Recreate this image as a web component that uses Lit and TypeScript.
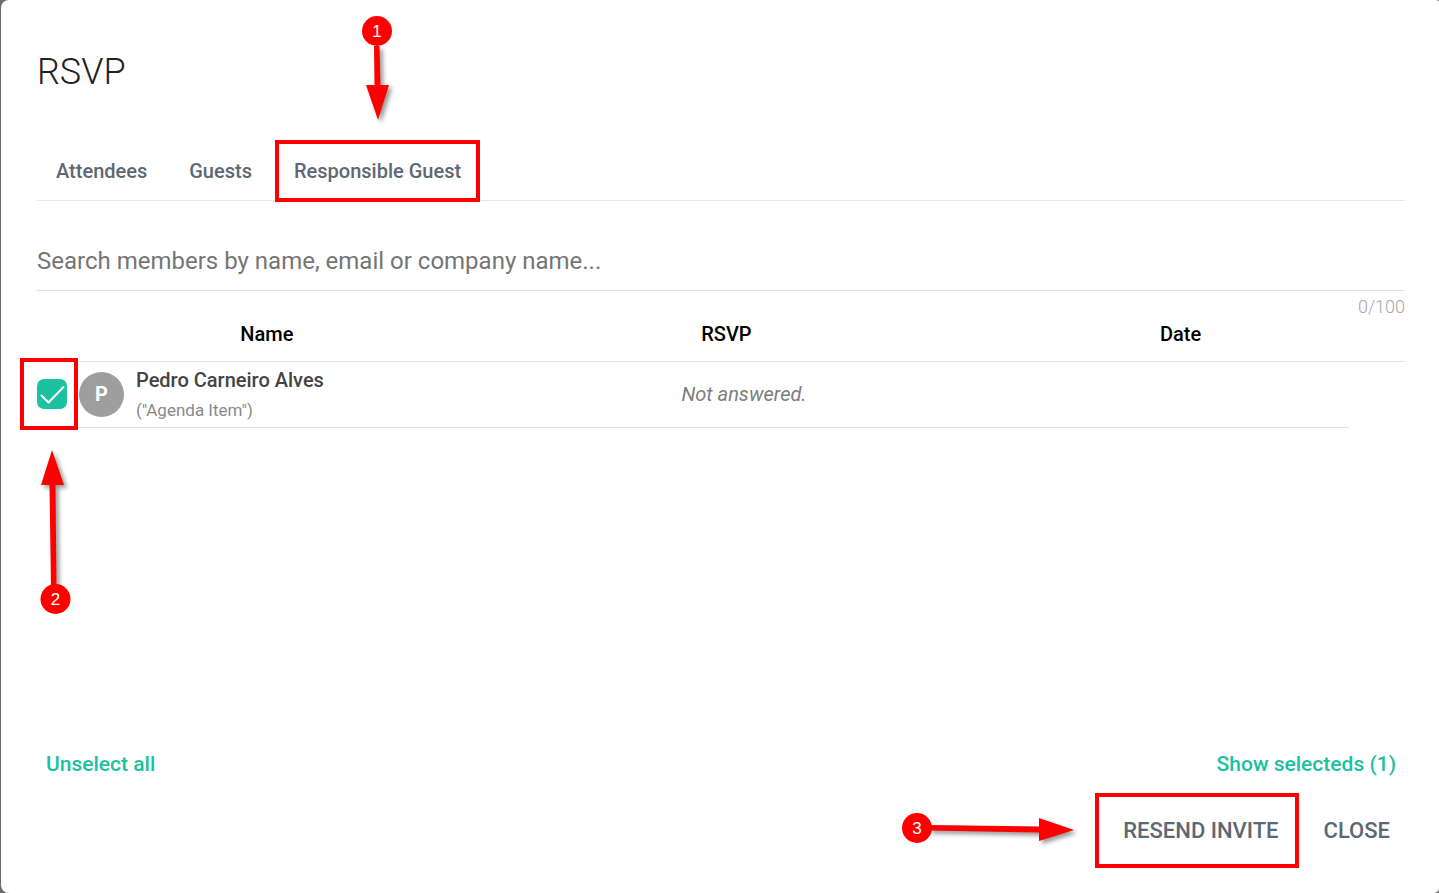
import { LitElement, html, css, svg } from "lit";
import { customElement, state } from "lit/decorators.js";

@customElement("app-root")
export class AppRoot extends LitElement {
  static styles = css`
    :host {
      display: block;
      min-height: 100vh;
      overflow: hidden;
      background: #6e6b6d;
      color: #222;
      font-family: Roboto, "Liberation Sans", sans-serif;
      font-size: 20px;
      line-height: 24px;
    }
    * {
      box-sizing: border-box;
    }
    button,
    input {
      font: inherit;
      color: inherit;
      border: 0;
      margin: 0;
      padding: 0;
      background: none;
      outline: none;
    }
    button {
      cursor: pointer;
    }
    .dialog {
      display: flex;
      flex-direction: column;
      min-height: 100vh;
      margin-left: 1px;
      padding: 48px 34px 38px 36px;
      background: #fff;
      border-radius: 8px 3px 5px 8px;
    }
    .title {
      margin: 0 0 45px;
      font-size: 36px;
      line-height: 48px;
      font-weight: 300;
    }
    .tabs {
      display: flex;
      gap: 6px;
      height: 60px;
      padding-left: 1px;
      border-bottom: 1px solid #e7e7e7;
    }
    .tab {
      position: relative;
      padding: 0 18px;
      color: #5c6873;
      font-weight: 500;
    }
    .search {
      margin-top: 30px;
    }
    .search-input {
      display: block;
      width: 100%;
      height: 60px;
      border-bottom: 1px solid #dedede;
      font-size: 24px;
    }
    .search-input::placeholder {
      color: #757575;
      opacity: 1;
    }
    .counter {
      padding-top: 4px;
      text-align: right;
      font-size: 18px;
      font-weight: 300;
      color: #a8a8a8;
    }
    .members {
      width: 100%;
      table-layout: fixed;
      border-collapse: separate;
      border-spacing: 0;
    }
    .col-wide {
      width: 33.6%;
    }
    .col-end {
      width: 56px;
    }
    .head {
      padding: 3px 0 15px;
      border-bottom: 1px solid #e7e7e7;
      color: #000;
      font-weight: 500;
    }
    .cell {
      height: 66px;
      padding: 0 0 1px;
      border-bottom: 1px solid #dedede;
      vertical-align: middle;
    }
    .member {
      display: flex;
      align-items: center;
      gap: 12px;
    }
    .check {
      position: relative;
      display: grid;
      width: 30px;
      height: 30px;
    }
    .check-input,
    .check-mark {
      grid-area: 1 / 1;
      width: 30px;
      height: 30px;
    }
    .check-input {
      appearance: none;
      border: 1px solid #9e9e9e;
      border-radius: 7px;
      cursor: pointer;
    }
    .check-input:checked {
      border: 0;
      background: #1bc1a1;
    }
    .check-mark {
      pointer-events: none;
      z-index: 1;
    }
    .check-input:not(:checked) + .check-mark {
      visibility: hidden;
    }
    .avatar {
      display: grid;
      place-items: center;
      width: 45px;
      height: 45px;
      border-radius: 50%;
      background: #9e9e9e;
      color: #fff;
      font-weight: 700;
    }
    .who {
      display: grid;
      padding-top: 2px;
      line-height: 30px;
    }
    .name {
      color: #444;
      font-weight: 500;
    }
    .note {
      color: #8a8a8a;
      font-size: 17px;
    }
    .answer {
      padding-left: 35px;
      text-align: center;
      font-style: italic;
      color: #7d7d7d;
    }
    .selection {
      display: flex;
      justify-content: space-between;
      margin-top: auto;
      padding: 0 9px;
    }
    .link {
      color: #1bc1a1;
      font-size: 21px;
      font-weight: 500;
    }
    .actions {
      display: flex;
      justify-content: flex-end;
      gap: 15px;
      margin-top: 31px;
    }
    .action {
      position: relative;
      height: 48px;
      padding: 0 15px;
      color: #5c6873;
      font-size: 22px;
      font-weight: 500;
      text-transform: uppercase;
    }
    .frame {
      position: absolute;
      border: 4px solid #f00;
      pointer-events: none;
    }
    .frame-tab {
      inset: -1px -1px -2px;
    }
    .frame-check {
      inset: -21px -11px -21px -17px;
    }
    .frame-action {
      inset: -14px -5px -13px -13px;
    }
    .pointer {
      position: absolute;
      overflow: visible;
      pointer-events: none;
      z-index: 2;
    }
    .pointer-tab {
      left: 50%;
      bottom: 100%;
    }
    .pointer-check {
      left: 50%;
      top: 100%;
    }
    .pointer-action {
      right: 100%;
      top: 50%;
    }
    .shaft {
      filter: drop-shadow(3px 3px 2px rgba(0, 0, 0, 0.4));
    }
    .digit {
      fill: #fff;
      font-family: "Liberation Sans", sans-serif;
      font-size: 17px;
      font-weight: 400;
      text-anchor: middle;
    }
  `;

  @state() private selected = true;

  private badge(x: number, y: number, n: number) {
    return svg`<circle cx=${x} cy=${y} r="15" fill="#f00"></circle>
      <text class="digit" x=${x} y=${y + 6}>${n}</text>`;
  }

  render() {
    return html`
      <main class="dialog">
        <h1 class="title">RSVP</h1>
        <div class="tabs" role="tablist">
          <button class="tab" role="tab">Attendees</button>
          <button class="tab" role="tab">Guests</button>
          <button class="tab" role="tab" aria-selected="true">
            Responsible Guest
            <span class="frame frame-tab"></span>
            <svg class="pointer pointer-tab" width="1" height="1" viewBox="0 0 1 1">
              <path class="shaft" fill="#f00" d="M-4 -94 H1.500 L2.500 -55 H11 L0 -20 L-12 -55 H-3.500 Z"></path>
              ${this.badge(-1, -109, 1)}
            </svg>
          </button>
        </div>
        <div class="search">
          <input
            class="search-input"
            type="text"
            maxlength="100"
            aria-label="Search members"
            placeholder="Search members by name, email or company name..."
          />
          <div class="counter">0/100</div>
        </div>
        <table class="members">
          <colgroup>
            <col class="col-wide" />
            <col class="col-wide" />
            <col />
            <col class="col-end" />
          </colgroup>
          <thead>
            <tr>
              <th class="head">Name</th>
              <th class="head">RSVP</th>
              <th class="head" colspan="2">Date</th>
            </tr>
          </thead>
          <tbody>
            <tr>
              <td class="cell">
                <div class="member">
                  <label class="check">
                    <input
                      class="check-input"
                      type="checkbox"
                      aria-label="Pedro Carneiro Alves"
                      .checked=${this.selected}
                      @change=${(e: Event) => (this.selected = (e.target as HTMLInputElement).checked)}
                    />
                    <svg class="check-mark" viewBox="0 0 30 30">
                      <path d="M4 16 L11.500 23.500 L27 7.500" fill="none" stroke="#fff" stroke-width="2"></path>
                    </svg>
                    <span class="frame frame-check"></span>
                    <svg class="pointer pointer-check" width="1" height="1" viewBox="0 0 1 1">
                      <path class="shaft" fill="#f00" d="M0 41 L12 76 H3.500 L4.500 178 H-1 L-2.500 76 H-11 Z"></path>
                      ${this.badge(3.5, 190, 2)}
                    </svg>
                  </label>
                  <span class="avatar">P</span>
                  <div class="who">
                    <span class="name">Pedro Carneiro Alves</span>
                    <span class="note">("Agenda Item")</span>
                  </div>
                </div>
              </td>
              <td class="cell answer">Not answered.</td>
              <td class="cell"></td>
              <td></td>
            </tr>
          </tbody>
        </table>
        <div class="selection">
          <button class="link" @click=${() => (this.selected = false)}>Unselect all</button>
          <button class="link">Show selecteds (${this.selected ? 1 : 0})</button>
        </div>
        <div class="actions">
          <button class="action">
            Resend invite
            <span class="frame frame-action"></span>
            <svg class="pointer pointer-action" width="1" height="1" viewBox="0 0 1 1">
              <path class="shaft" fill="#f00" d="M-178 -6 L-68 -4.500 V-13 L-33 -1 L-68 10 V1.500 L-178 -0.500 Z"></path>
              ${this.badge(-190, -3, 3)}
            </svg>
          </button>
          <button class="action">Close</button>
        </div>
      </main>
    `;
  }
}
